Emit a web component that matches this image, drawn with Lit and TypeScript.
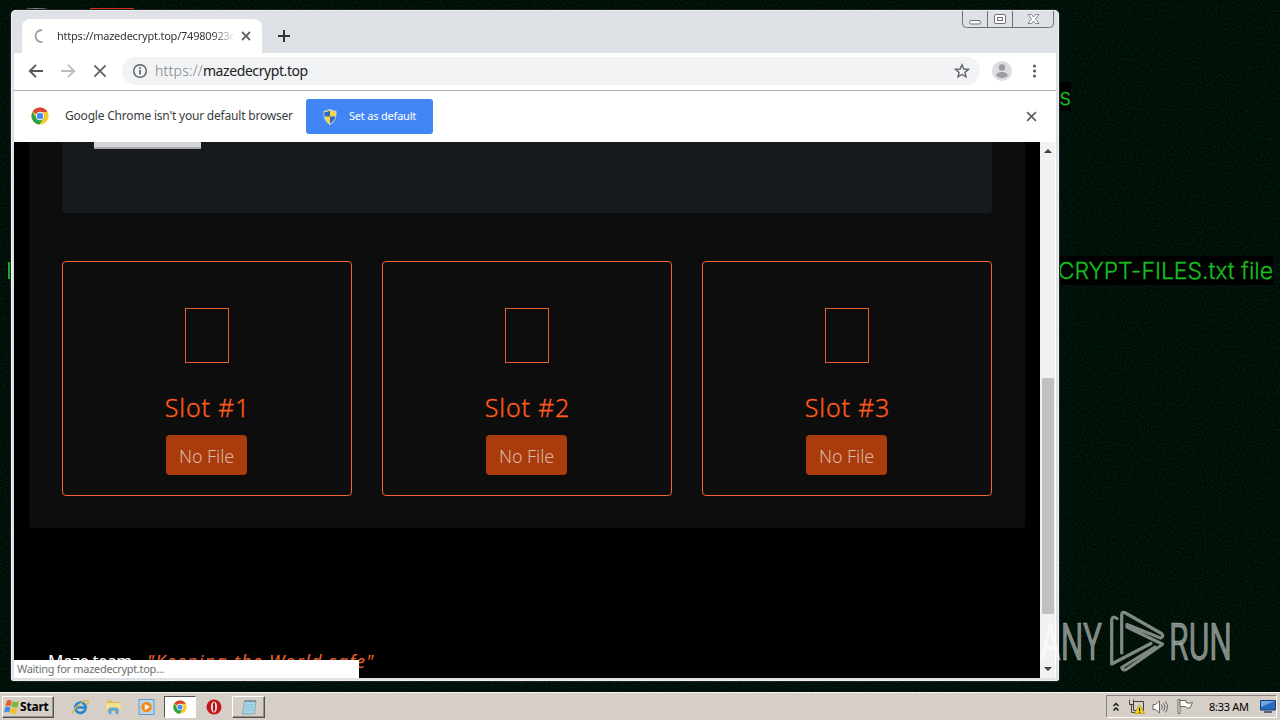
import { LitElement, html, css, svg } from "lit";
import { customElement } from "lit/decorators.js";

const chromeLogo = (size: number) => html`<svg width=${size} height=${size} viewBox="0 0 18 18">
  <circle cx="9" cy="9" r="8.6" fill="#f7c92c"></circle>
  <path d="M9 9 1.6 4.7A8.6 8.6 0 0 1 16.5 4.9H9z" fill="#dc4437"></path>
  <path d="M1.6 4.7A8.6 8.6 0 0 0 8.6 17.6L12.6 11 9 9 5.4 11z" fill="#2ba24c"></path>
  <circle cx="9" cy="9" r="4.2" fill="#fff"></circle>
  <circle cx="9" cy="9" r="3.3" fill="#4a8af4"></circle>
</svg>`;

const cross = (size: number, width: number) => html`<svg width=${size} height=${size} viewBox="0 0 10 10">
  <path d="M1 1 9 9M9 1 1 9" stroke="#5f6368" stroke-width=${width} fill="none"></path>
</svg>`;

@customElement("browser-tabs")
class BrowserTabs extends LitElement {
  static styles = css`
    :host { display: flex; height: 43px; box-sizing: border-box; padding: 9px 4px 0 11px; font: 11px "Noto Sans", sans-serif; color: #33363b; }
    .tab { display: flex; align-items: center; width: 240px; height: 34px; box-sizing: border-box; background: #fff; border-radius: 8px 8px 0 0; padding: 0 11px 0 12px; }
    .spin { display: block; width: 14px; height: 14px; }
    .title { margin: -1px 0 0 9px; width: 176px; white-space: nowrap; overflow: hidden; letter-spacing: -.22px; -webkit-mask-image: linear-gradient(90deg, #000 155px, transparent 179px); }
    .close { display: flex; margin-left: 8px; }
    .plus { display: block; margin: 11px 0 0 16px; }
    .space { flex: 1; }
    .controls { display: block; margin-top: -9px; }
  `;
  render() {
    return html`
      <div class="tab">
        <svg class="spin" viewBox="0 0 14 14"><path d="M8 1C4 1 1.500 3.800 1.500 7S4 13 8.500 13.400" fill="none" stroke="#9b9da1" stroke-width="1.800"></path></svg>
        <span class="title">https://mazedecrypt.top/74980923c</span>
        <span class="close">${cross(10, 1.8)}</span>
      </div>
      <svg class="plus" width="12" height="12" viewBox="0 0 12 12"><path d="M6 0v12M0 6h12" stroke="#30333a" stroke-width="2"></path></svg>
      <span class="space"></span>
      <svg class="controls" width="94" height="19" viewBox="0 0 94 19" fill="none" stroke="#6d7078">
        <path d="M1.500 1v12.500q0 4 4 4h83q4 0 4-4V1M26.500 1v16M51.500 1v16"></path>
        <rect x="8.500" y="10.500" width="11" height="3.500" rx="1.500" fill="#fff"></rect>
        <rect x="33.500" y="4.500" width="11" height="9" rx="1.500" fill="#fff"></rect>
        <rect x="36.500" y="7.500" width="5" height="3"></rect>
        <path d="M67 4.500h3.500l2 2.500 2-2.500H78l-3.500 4.500 3.500 4.500h-3.500l-2-2.500-2 2.500H67l3.500-4.500z" fill="#fff" stroke-width=".8"></path>
      </svg>`;
  }
}

@customElement("browser-toolbar")
class BrowserToolbar extends LitElement {
  static styles = css`
    :host { display: flex; align-items: center; height: 38px; box-sizing: border-box; background: #fff; padding: 0 19px 1px 14px; border-bottom: 1px solid #b1b3b6; }
    svg { display: block; flex: none; }
    .fwd { margin-left: 16px; }
    .stop { display: flex; margin-left: 17px; }
    .omni { flex: 1; display: flex; align-items: center; height: 28px; margin: 0 12px 0 15px; padding: 0 10px 0 10px; border-radius: 14px; background: #f1f3f4; font: 300 14px "Noto Sans", sans-serif; }
    .url { flex: 1; margin: -1px 0 0 7px; color: #202124; }
    .scheme { color: #7d8186; font-weight: 300; letter-spacing: .25px; }
    .host { font-weight: 400; letter-spacing: -.42px; }
    .menu { margin-left: 20px; }
  `;
  render() {
    return html`
      <svg width="16" height="16" viewBox="0 0 16 16" fill="none" stroke="#54575c" stroke-width="1.900"><path d="M15 8H2.500M8 1.800 1.800 8 8 14.200"></path></svg>
      <svg class="fwd" width="16" height="16" viewBox="0 0 16 16" fill="none" stroke="#bbbdc0" stroke-width="1.900"><path d="M1 8h12.500M8 1.800 14.200 8 8 14.200"></path></svg>
      <span class="stop">${cross(14, 1.3)}</span>
      <div class="omni">
        <svg width="16" height="16" viewBox="0 0 16 16"><circle cx="8" cy="8" r="6.300" fill="none" stroke="#5f6368" stroke-width="1.500"></circle><path d="M8 7v4.500M8 4.300V6" stroke="#5f6368" stroke-width="1.700"></path></svg>
        <span class="url"><span class="scheme">https://</span><span class="host">mazedecrypt.top</span></span>
        <svg width="16" height="16" viewBox="0 0 16 16"><path d="m8 1.800 1.800 4.200 4.600.4-3.500 3 1.100 4.500L8 11.500 4 13.900l1.100-4.500-3.500-3L6.200 6z" fill="none" stroke="#5f6368" stroke-width="1.400"></path></svg>
      </div>
      <svg width="20" height="20" viewBox="0 0 20 20"><circle cx="10" cy="10" r="10" fill="#dcdddf"></circle><circle cx="10" cy="6.500" r="3.200" fill="#9a9c9f"></circle><ellipse cx="10" cy="14" rx="5.700" ry="3" fill="#9a9c9f"></ellipse></svg>
      <svg class="menu" width="5" height="14" viewBox="0 0 5 14" fill="#54575c"><circle cx="2.500" cy="2" r="1.500"></circle><circle cx="2.500" cy="7" r="1.500"></circle><circle cx="2.500" cy="12" r="1.500"></circle></svg>`;
  }
}

@customElement("default-bar")
class DefaultBar extends LitElement {
  static styles = css`
    :host { display: flex; align-items: center; height: 51px; box-sizing: border-box; background: #fff; padding: 0 19px 1px 17px; font: 12px "Noto Sans", sans-serif; color: #3a3c40; }
    svg { display: block; flex: none; }
    .msg { width: 229px; margin: -1px 0 0 16px; white-space: nowrap; letter-spacing: -.2px; }
    .set { display: flex; align-items: center; width: 127px; height: 35px; box-sizing: border-box; margin: 1px 0 0 12px; padding-left: 17px; border-radius: 3px; background: #4285f4; color: #fff; font-size: 11px; }
    .label { margin: -2px 0 0 12px; white-space: nowrap; letter-spacing: -.2px; }
    .space { flex: 1; }
  `;
  render() {
    return html`
      ${chromeLogo(18)}
      <span class="msg">Google Chrome isn't your default browser</span>
      <div class="set">
        <svg width="14" height="16" viewBox="0 0 14 16"><path d="M7 .5Q4 2.500 1 2.200q-.8 9 6 13.300Q13.800 11.200 13 2.200 10 2.500 7 .5z" fill="#f5d546" stroke="#d7dce2"></path><path d="M7 1.500v6H1.500Q1.200 5 1.500 3 4.500 3.200 7 1.500zM7 7.500h5.400Q11.500 12 7 14.700z" fill="#326cb8"></path></svg>
        <span class="label">Set as default</span>
      </div>
      <span class="space"></span>
      ${cross(11, 1.6)}`;
  }
}

@customElement("slot-card")
class SlotCard extends LitElement {
  static properties = { number: { type: Number } };
  declare number: number;
  static styles = css`
    :host { display: flex; flex-direction: column; align-items: center; width: 290px; height: 235px; box-sizing: border-box; border: 1px solid #f26430; border-radius: 4px; padding-top: 46px; }
    .glyph { width: 44px; height: 55px; box-sizing: border-box; border: 1px solid #e2612f; }
    .name { margin: 26px 0 0 1px; height: 36px; font: 300 25px/36px "Noto Sans", sans-serif; color: #ff5a1f; letter-spacing: .8px; -webkit-text-stroke: .3px #ff5a1f; }
    .state { display: grid; place-items: center; width: 81px; height: 40px; box-sizing: border-box; padding-top: 1px; margin: 10px 1px 0 0; border-radius: 4px; background: #aa3b0c; color: #d9b7a5; font: 300 18px "Noto Sans", sans-serif; letter-spacing: -.1px; }
  `;
  render() {
    return html`<div class="glyph"></div><div class="name">Slot #${this.number}</div><div class="state">No File</div>`;
  }
}

@customElement("maze-page")
class MazePage extends LitElement {
  static styles = css`
    :host { display: grid; grid-template-columns: 1fr 16px; height: 536px; overflow: hidden; background: #000; }
    .body { padding: 0 15px; overflow: hidden; height: 536px; box-sizing: border-box; }
    .box { height: 386px; box-sizing: border-box; padding: 0 33px; background: #0d0d0d; border-radius: 0 0 4px 4px; }
    .upload { height: 71px; box-sizing: border-box; padding-left: 32px; background: #15191c; border-radius: 0 0 4px 4px; }
    .btn { width: 107px; height: 7px; box-sizing: border-box; background: #d5d5d7; border-bottom: 2px solid #aaaaac; }
    .slots { display: flex; gap: 30px; margin-top: 48px; }
    .foot { display: flex; height: 40px; padding: 119px 0 0 19px; white-space: nowrap; font: 400 17px/28px "Noto Sans", sans-serif; color: #fff; }
    .who { width: 99px; letter-spacing: -.5px; }
    .motto { color: #f2622c; font-style: italic; font-size: 18px; font-weight: 400; letter-spacing: 1.25px; }
    .scroll { display: flex; flex-direction: column; align-items: center; background: #f1f1f1; border-right: 1px solid #fff; box-sizing: border-box; }
    .up { margin-top: 6px; }
    .thumb { width: 12px; height: 236px; margin-top: 225px; background: #c1c1c1; }
    .down { margin-top: 53px; }
    svg { display: block; }
  `;
  render() {
    return html`
      <div class="body">
        <div class="box">
          <div class="upload"><div class="btn"></div></div>
          <div class="slots">${[1, 2, 3].map((n) => html`<slot-card .number=${n}></slot-card>`)}</div>
        </div>
        <div class="foot"><span class="who">Maze team -</span><span class="motto">"Keeping the World safe"</span></div>
      </div>
      <div class="scroll">
        <svg class="up" width="8" height="5" viewBox="0 0 8 5"><path d="M0 5 4 1 8 5z" fill="#404040"></path></svg>
        <div class="thumb"></div>
        <svg class="down" width="8" height="5" viewBox="0 0 8 5"><path d="M0 0 4 4 8 0z" fill="#404040"></path></svg>
      </div>`;
  }
}

@customElement("task-bar")
class TaskBar extends LitElement {
  static styles = css`
    :host { display: flex; align-items: center; height: 28px; box-sizing: border-box; padding: 2px 3px 2px 2px; background: #d5cfc7; border-top: 1px solid #f7f5f1; font: 11px "Noto Sans", sans-serif; color: #000; }
    svg { display: block; flex: none; }
    .start { display: flex; align-items: center; width: 52px; height: 22px; box-sizing: border-box; padding-left: 1px; background: #d5cfc7; border: 1px solid; border-color: #fff #55524e #55524e #fff; box-shadow: inset -1px -1px #96928b; font: bold 12px "Noto Sans", sans-serif; letter-spacing: -.2px; }
    .start span { margin-top: -1px; }
    .quick { display: flex; align-items: center; margin-left: 10px; }
    .ico { display: grid; place-items: center; width: 33px; height: 22px; box-sizing: border-box; }
    .on { width: 32px; margin: 0 1px; background: #fff; border: 1px solid; border-color: #55524e #fff #fff #55524e; }
    .open { width: 33px; margin-left: 2px; border: 1px solid; border-color: #fff #55524e #55524e #fff; box-shadow: inset -1px -1px #96928b; }
    .space { flex: 1; }
    .tray { display: flex; align-items: center; width: 171px; height: 23px; box-sizing: border-box; padding-left: 6px; border: 1px solid; border-color: #8a867f #fff #fff #8a867f; }
    .net { margin-left: 9px; }
    .vol { margin-left: 7px; }
    .flag { margin-left: 8px; }
    .time { width: 41px; margin-left: 16px; letter-spacing: -.3px; white-space: nowrap; }
    .desk { margin-left: 11px; }
  `;
  render() {
    return html`
      <div class="start">
        <svg width="16" height="16" viewBox="0 0 15 15"><path d="M2.800 1.500Q5 .3 7.200 1.800L6.200 6.800Q4 5.400 1.400 6.800z" fill="#e85b2a"></path><path d="M8 2.200q2.800 1.200 6 0L12.700 7.500Q10 8.500 7 7.200z" fill="#7bb83a"></path><path d="M1.200 7.700Q3.500 6.500 6 7.900L4.800 12.500Q2.600 11.500 0 12.600z" fill="#3f8ddb"></path><path d="M6.800 8.200q3 1.200 5.700.2l-1.200 5Q8.500 14.500 5.600 13z" fill="#f5bd2a"></path></svg>
        <span>Start</span>
      </div>
      <div class="quick">
        <div class="ico"><svg width="17" height="16" viewBox="0 0 17 16"><path d="M13.500 10A5.200 5.200 0 1 1 13.300 6.800L13.700 8.500H4" fill="none" stroke="#2387d1" stroke-width="2.700"></path><path d="M1.500 15Q-.5 12 6 6.500T16 1.500Q17 3 14.500 6" fill="none" stroke="#e3b93a" stroke-width="1.300"></path></svg></div>
        <div class="ico"><svg width="17" height="16" viewBox="0 0 17 16"><path d="M2 1.500h5l1 1.500h6.500v9.500H2z" fill="#dfbd55"></path><path d="M1 4h14.500v6.500H1z" fill="#f4e08a"></path><path d="M3.500 15V10.500Q4 8.500 6 8.500h5q2 0 2.500 2V15h-3v-3.500h-4V15z" fill="#5aa9dc"></path></svg></div>
        <div class="ico"><svg width="17" height="16" viewBox="0 0 17 16"><path d="M1 .5h15v15H1z" fill="#b7d6ee" stroke="#6398c2"></path><circle cx="8.500" cy="8" r="5.300" fill="#f28b18"></circle><path d="M6.800 5v6L12 8z" fill="#fff"></path></svg></div>
        <div class="ico on">${chromeLogo(14)}</div>
        <div class="ico"><svg width="16" height="16" viewBox="0 0 16 16"><circle cx="8" cy="8" r="7.500" fill="#c4171c"></circle><ellipse cx="8" cy="8" rx="3" ry="5.500" fill="#f5eeee"></ellipse><ellipse cx="8" cy="8" rx="1.200" ry="4.700" fill="#a3161b"></ellipse></svg></div>
        <div class="ico open"><svg width="16" height="16" viewBox="0 0 16 16"><path d="M3.500 2H15l-1.500 13H1.500z" fill="#a4d5e3" stroke="#799ba8" stroke-width=".7"></path><path d="M4 1v2M6 1v2M8 1v2M10 1v2M12 1v2M14 1v2" stroke="#46616d" stroke-width=".8"></path><path d="M4.500 5.500h8M4 8h8M3.700 10.500h8" stroke="#8cc2d2" stroke-width=".8"></path></svg></div>
      </div>
      <span class="space"></span>
      <div class="tray">
        <svg width="6" height="10" viewBox="0 0 6 10"><path d="M.5 4 3 1.500 5.500 4M.5 8.500 3 6l2.500 2.500" fill="none" stroke="#111" stroke-width="1.400"></path></svg>
        <svg class="net" width="17" height="16" viewBox="0 0 17 16"><path d="M5.500 2.500h10v9h-10z" fill="#d5cfc7" stroke="#444"></path><path d="M1.500 2.500v3h4v-5M1.500.5v2M3.500 5.500v8H10" fill="none" stroke="#444"></path><path d="m11.500 6 5 8.500h-10z" fill="#f7d413" stroke="#b79500" stroke-width=".7"></path><path d="M11.500 9v3M11.500 12.700v1" stroke="#111" stroke-width="1.200"></path></svg>
        <svg class="vol" width="17" height="14" viewBox="0 0 17 14" fill="none" stroke="#666"><path d="M1 4.500h2.500L7.500 1v12L3.500 9.500H1z" fill="#fff"></path><path d="M9.500 4.500q1.500 2.500 0 5M11.500 3q3 4 0 8M13.500 1.500q4 5.500 0 11"></path></svg>
        <svg class="flag" width="16" height="15" viewBox="0 0 16 15" fill="#fff" stroke="#666"><path d="M1 .5h2v14H1z"></path><path d="M3 1.500h6v2q3 1.500 6.500 0L13 9Q10 10 8 7.500H3z"></path></svg>
        <span class="time">8:33 AM</span>
        <svg class="desk" width="16" height="13" viewBox="0 0 16 13"><path d="M.5.500h15v9.500H.5z" fill="#2869bd" stroke="#183f78"></path><path d="M1 1h14L1 7z" fill="#6ea8e6"></path><path d="M4 12h8" stroke="#2b4364" stroke-width="1.500"></path></svg>
      </div>`;
  }
}

@customElement("app-root")
class AppRoot extends LitElement {
  static styles = css`
    :host { display: grid; grid-template-rows: 692px 28px; width: 1280px; height: 720px; overflow: hidden; background: #001209; }
    .desktop { position: relative; overflow: hidden; }
    .grain { position: absolute; inset: 0; }
    .peek { position: absolute; top: 8px; left: 90px; width: 44px; height: 4px; background: #d72b1f; }
    .bin { position: absolute; top: 8px; left: 24px; width: 25px; height: 4px; border-radius: 50%; background: #7d8682; }
    .wall { position: absolute; right: 7px; top: 256px; height: 28px; padding: 1px 0 0; background: #000; color: #18bd20; font: 300 23px/28px Inter, sans-serif; letter-spacing: -.03px; white-space: nowrap; -webkit-text-stroke: .3px #18bd20; }
    .one { top: 82px; right: 209px; }
    .edge { position: absolute; left: 8px; top: 262px; width: 3px; height: 17px; background: #23a72a; }
    .window { position: absolute; left: 11px; top: 10px; width: 1048px; height: 671px; box-sizing: border-box; border-radius: 5px 5px 3px 3px; background: #dee1e6; box-shadow: inset 0 0 0 1px #eceef0, 0 0 0 1px #1b2422; }
    .inner { margin: 0 3px; }
    .status { position: absolute; left: 3px; top: 650px; width: 345px; height: 18px; box-sizing: border-box; padding-left: 3px; background: #fff; color: #6d7074; font: 11px/18px "Noto Sans", sans-serif; letter-spacing: -.31px; }
    .mark { position: absolute; left: 1036px; top: 606px; }
    .word { font: 400 52px Roboto, sans-serif; }
  `;
  render() {
    return html`
      <div class="desktop">
        <svg class="grain" width="1280" height="692">
          <filter id="g" x="0" y="0" width="100%" height="100%" color-interpolation-filters="sRGB"><feTurbulence type="fractalNoise" baseFrequency=".55" numOctaves="2" seed="4"></feTurbulence><feColorMatrix values="0 0 0 0 0  0 .16 0 0 -.012  0 .09 0 0 -.013  0 0 0 0 1"></feColorMatrix></filter>
          <rect width="1280" height="692" filter="url(#g)"></rect>
        </svg>
        <span class="bin"></span><span class="peek"></span>
        <span class="wall one">s</span>
        <span class="wall">DECRYPT-FILES.txt file</span>
        <span class="edge"></span>
        <div class="window">
          <browser-tabs></browser-tabs>
          <div class="inner">
            <browser-toolbar></browser-toolbar>
            <default-bar></default-bar>
            <maze-page></maze-page>
          </div>
          <div class="status">Waiting for mazedecrypt.top...</div>
        </div>
        <svg class="mark" width="210" height="76" viewBox="0 0 210 76" fill="#fff" fill-opacity=".5">
          ${svg`<text class="word" x="4" y="53.500" textLength="62" lengthAdjust="spacingAndGlyphs" stroke="#fff" stroke-opacity=".5" stroke-width=".5">ANY</text>
          <text class="word" x="133" y="53.500" textLength="63" lengthAdjust="spacingAndGlyphs" stroke="#fff" stroke-opacity=".5" stroke-width=".5">RUN</text>`}
          <path d="M81 12.500Q75.700 9 75.700 15V58L115 37.500M85.700 47V9Q85.700 5 89.500 7L125.500 27.500Q128.500 30 124.500 32L91 18.500V21L126.700 38.300 91 63Q87 65.500 85.700 61.500L119 41" fill="none" stroke="#fff" stroke-opacity=".5" stroke-width="3.200" stroke-linejoin="round" stroke-linecap="round"></path>
        </svg>
      </div>
      <task-bar></task-bar>`;
  }
}
